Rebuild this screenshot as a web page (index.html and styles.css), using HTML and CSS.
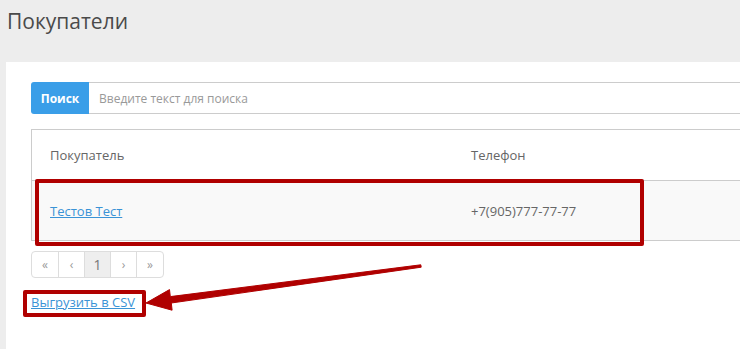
FILE: index.html
```html
<!DOCTYPE html>
<html lang="ru">
<head>
	<meta charset="UTF-8">
	<title>Покупатели</title>
	<link rel="stylesheet" href="styles.css">
</head>
<body>
<div class="page-head">
	<h1>Покупатели</h1>
</div>
<div class="panel">
	<div class="search">
		<button class="search-btn">Поиск</button>
		<input class="search-input" type="text" placeholder="Введите текст для поиска">
	</div>
	<table class="grid">
		<tr class="head">
			<td class="c-name">Покупатель</td>
			<td>Телефон</td>
		</tr>
		<tr class="row">
			<td class="c-name"><a href="#">Тестов Тест</a></td>
			<td>+7(905)777-77-77</td>
		</tr>
	</table>
	<ul class="pager">
		<li>&laquo;</li>
		<li>&lsaquo;</li>
		<li class="active">1</li>
		<li>&rsaquo;</li>
		<li>&raquo;</li>
	</ul>
	<a class="export" href="#">Выгрузить в CSV</a>
</div>

<div class="mark mark-row"></div>
<div class="mark mark-csv"></div>
<svg class="arrow" width="740" height="349" viewBox="0 0 740 349">
	<polygon points="146,303 169.5,289.6 170.3,296.6 420.8,264.8 421.2,267.2 171.3,303 172.1,310.2" fill="#b00000" stroke="#b00000" stroke-width="1" stroke-linejoin="round"/>
</svg>
</body>
</html>
```

FILE: styles.css
```css
html, body { margin:0; height:100%; }
body { background:#ededed; font-family:"Open Sans", "Liberation Sans", sans-serif; overflow:hidden; position:relative; }

.page-head { height:62px; padding-left:7px; box-sizing:border-box; }
.page-head h1 { margin:0; font-size:21px; font-weight:normal; line-height:42px; color:#4a4a4a; }

.panel { background:#fff; margin-left:6px; height:calc(100% - 62px); padding:20px 0 0 25px; box-sizing:border-box; overflow:hidden; }

.search { display:flex; height:32px; }
.search-btn { width:58px; border:0; border-radius:3px 0 0 3px; background:#3a9ee8; color:#fff; font:bold 12px "Open Sans", sans-serif; padding:0; }
.search-input { flex:1; min-width:0; border:1px solid #ccc; border-left:0; border-right:0; padding:0 0 0 10px; font:12px "Open Sans", sans-serif; color:#555; outline:none; }
.search-input::placeholder { color:#999; }

.grid { margin-top:15px; width:100%; border-collapse:collapse; border:1px solid #ccc; border-right:0; font-size:13px; }
.grid td { padding:0 0 0 18px; color:#666; }
.grid .c-name { width:403px; }
.head td { height:50px; }
.row td { height:59px; background:#f9f9f9; border-top:1px solid #ccc; }
.row a { color:#3a93d6; }

.pager { display:flex; list-style:none; margin:10px 0 0; padding:0; }
.pager li { width:27px; height:27px; box-sizing:border-box; border:1px solid #ddd; margin-left:-1px; display:flex; align-items:center; justify-content:center; font-size:12px; color:#999; }
.pager li:first-child { margin-left:0; border-radius:4px 0 0 4px; width:28px; }
.pager li:last-child { border-radius:0 4px 4px 0; width:28px; }
.pager .active { background:#eee; color:#777; font-size:14px; }

.export { display:inline-block; margin-top:15px; font-size:13px; line-height:18px; color:#3a93d6; }

.mark { position:absolute; border:4px solid #b00000; border-radius:2px; box-sizing:border-box; }
.mark-row { left:35px; top:179px; width:609px; height:67px; }
.mark-csv { left:23px; top:290px; width:123px; height:27px; }
.arrow { position:absolute; left:0; top:0; }
```
